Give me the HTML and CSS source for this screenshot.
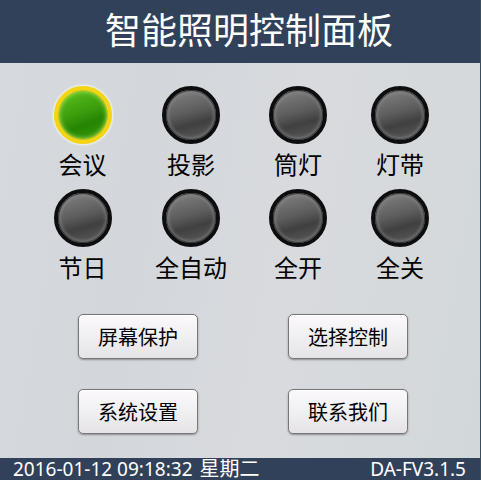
FILE: index.html
```html
<!DOCTYPE html>
<html lang="zh-CN">

  <head>

    <meta charset="utf-8">
    <meta name="viewport" content="width=device-width, initial-scale=1">

    <title>智能照明控制面板</title>

    <link rel="stylesheet" href="styles.css">

  </head>

  <body>
    <header class="topbar">
      <h1>智能照明控制面板</h1>
    </header>

    <main class="panel">
      <!-- 场景开关 -->
      <div class="lamps">
        <label class="lamp"><input type="checkbox" name="meeting" checked><span>会议</span></label>
        <label class="lamp"><input type="checkbox" name="projector"><span>投影</span></label>
        <label class="lamp"><input type="checkbox" name="downlight"><span>筒灯</span></label>
        <label class="lamp"><input type="checkbox" name="strip"><span>灯带</span></label>
        <label class="lamp"><input type="checkbox" name="holiday"><span>节日</span></label>
        <label class="lamp"><input type="checkbox" name="auto"><span>全自动</span></label>
        <label class="lamp"><input type="checkbox" name="all-on"><span>全开</span></label>
        <label class="lamp"><input type="checkbox" name="all-off"><span>全关</span></label>
      </div>

      <!-- 功能按钮 -->
      <div class="actions">
        <button type="button">屏幕保护</button>
        <button type="button">选择控制</button>
        <button type="button">系统设置</button>
        <button type="button">联系我们</button>
      </div>
    </main>

    <footer class="statusbar">
      <time datetime="2016-01-12T09:18:32">2016-01-12 09:18:32</time>
      <span class="weekday">星期二</span>
      <span class="version">DA-FV3.1.5</span>
    </footer>
  </body>

</html>
```
FILE: styles.css
```css
* {
  box-sizing: border-box;
}

body {
  display: flex;
  flex-direction: column;
  min-height: 100vh;
  margin: 0;
  border-right: 1px solid #3a4d5c;
  background: #d5d8dc;
  color: #000;
  font-family: "Noto Sans", "Noto Sans CJK SC", sans-serif;
}

.topbar {
  padding: 5px 0 6px 18px;
  background: #31415a;
  color: #fff;
  text-align: center;
}

.topbar h1 {
  margin: 0;
  font-size: 36px;
  font-weight: normal;
  line-height: 52px;
}

.panel {
  flex: 1;
  background: linear-gradient(100deg, #d6d9de, #d3d7db 30%, #d8dade 60%, #d2d8da);
}

/* scene lamps */
.lamps {
  display: grid;
  grid-template-columns: 109fr 108fr 106fr 98fr;
  row-gap: 4px;
  padding: 23px 31px 0 28px;
}

.lamp {
  display: flex;
  flex-direction: column;
  align-items: center;
  font-size: 24px;
  line-height: 41px;
}

.lamp input {
  appearance: none;
  width: 58px;
  height: 58px;
  margin: 0;
  border: 4px solid #0c0d0e;
  border-radius: 50%;
  background: linear-gradient(165deg, #858585, #5c5c5c 45%, #404040 65%, #5e5e5e);
  background-clip: padding-box;
  box-shadow: inset 0 0 1px 1px #303030, inset 0 0 4px 1px #999;
}

.lamp input:checked {
  border-color: #f5d510;
  background: linear-gradient(160deg, #5cc51c, #3c9d0d 45%, #258503 65%, #3a9a0c);
  background-clip: padding-box;
  box-shadow: inset 0 0 1px 1px #c9c010, inset 0 0 5px 1px #b5e860, 0 0 2px 1px #f2fbf5;
}

.actions {
  display: grid;
  grid-template-columns: 1fr 1fr;
  gap: 30px 90px;
  padding: 26px 72px 24px 78px;
}

.actions button {
  height: 45px;
  padding: 0;
  border: 1px solid #77777b;
  border-radius: 5px;
  background: linear-gradient(#fbf9fb, #f0eff1 50%, #e5e3e6);
  box-shadow: 0 1px 2px #8a8c90, inset 0 1px 1px #fff;
  color: #000;
  font-family: inherit;
  font-size: 20px;
}

.statusbar {
  display: flex;
  gap: 7px;
  padding: 0 14px 0 13px;
  background: #31415a;
  color: #fff;
  font-size: 19px;
  line-height: 22px;
}

.weekday {
  font-size: 20px;
}

.version {
  margin-left: auto;
}
```
